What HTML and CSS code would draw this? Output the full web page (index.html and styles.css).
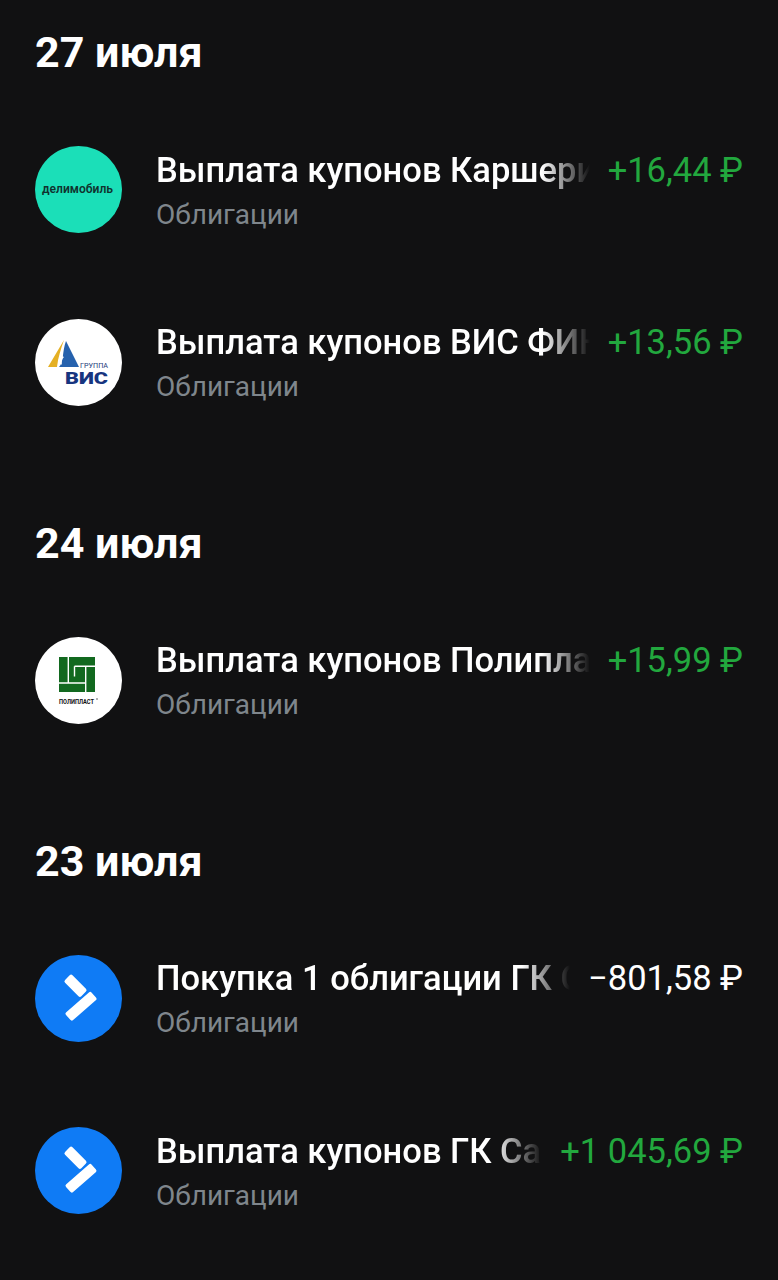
FILE: index.html
```html
<!DOCTYPE html>
<html lang="ru">
<head>
<meta charset="utf-8">
<title>Операции</title>
<link rel="stylesheet" href="styles.css">
</head>
<body>
<main class="feed">
  <section class="day">
    <h2 class="day-title">27 июля</h2>
    <div class="op">
      <svg class="logo" viewBox="0 0 87 87"><circle cx="43.500" cy="43.500" r="43.500" fill="#1bdfb8"/><text class="t-deli" x="7" y="47" textLength="71" lengthAdjust="spacingAndGlyphs">делимобиль</text></svg>
      <div class="op-text"><div class="op-title">Выплата купонов Каршеринг Руссия</div><div class="op-sub">Облигации</div></div>
      <div class="op-sum plus">+16,44 ₽</div>
    </div>
    <div class="op">
      <svg class="logo" viewBox="0 0 87 87"><circle cx="43.500" cy="43.500" r="43.500" fill="#fff"/><path d="M29 21 L13 48 H22 C23 38 26 30 29 21Z" fill="#e5b024"/><path d="M31 22 L44 48 H24 C29 43 27 33 31 22Z" fill="#2561ad"/><path d="M27 37 C24 41 25 44 27 46 C26 42 27 40 29 38Z" fill="#fff"/><text class="t-gr" x="45" y="49" textLength="28" lengthAdjust="spacingAndGlyphs">ГРУППА</text><text class="t-vis" x="30" y="65" textLength="43" lengthAdjust="spacingAndGlyphs">ВИС</text></svg>
      <div class="op-text"><div class="op-title">Выплата купонов ВИС ФИНАНС</div><div class="op-sub">Облигации</div></div>
      <div class="op-sum plus">+13,56 ₽</div>
    </div>
  </section>
  <section class="day">
    <h2 class="day-title">24 июля</h2>
    <div class="op">
      <svg class="logo" viewBox="0 0 87 87"><circle cx="43.500" cy="43.500" r="43.500" fill="#fff"/><rect x="24" y="20" width="36" height="35" fill="#12691f"/><path d="M33.300 20V46M24 46H50.700M50.700 29.300V55M39.500 29.300H60M39.500 29.300V39.500" stroke="#fff" stroke-width="1.400" fill="none"/><text class="t-poli" x="24" y="67" textLength="35" lengthAdjust="spacingAndGlyphs">ПОЛИПЛАСТ</text><circle cx="62" cy="62" r="1" fill="#999"/></svg>
      <div class="op-text"><div class="op-title">Выплата купонов Полипласт</div><div class="op-sub">Облигации</div></div>
      <div class="op-sum plus">+15,99 ₽</div>
    </div>
  </section>
  <section class="day">
    <h2 class="day-title">23 июля</h2>
    <div class="op">
      <svg class="logo" viewBox="0 0 87 87"><circle cx="43.500" cy="43.500" r="43.500" fill="#0f7bf5"/><rect x="29" y="25.500" width="23" height="10.500" rx="2" fill="#fff" transform="rotate(45 40.500 30.750)"/><rect x="29" y="46" width="34" height="10.500" rx="2" fill="#fff" transform="rotate(-41 46 51.250)"/></svg>
      <div class="op-text"><div class="op-title">Покупка 1 облигации ГК Самолет</div><div class="op-sub">Облигации</div></div>
      <div class="op-sum">−801,58 ₽</div>
    </div>
    <div class="op">
      <svg class="logo" viewBox="0 0 87 87"><circle cx="43.500" cy="43.500" r="43.500" fill="#0f7bf5"/><rect x="29" y="25.500" width="23" height="10.500" rx="2" fill="#fff" transform="rotate(45 40.500 30.750)"/><rect x="29" y="46" width="34" height="10.500" rx="2" fill="#fff" transform="rotate(-41 46 51.250)"/></svg>
      <div class="op-text"><div class="op-title">Выплата купонов ГК Самолет</div><div class="op-sub">Облигации</div></div>
      <div class="op-sum plus">+1 045,69 ₽</div>
    </div>
  </section>
</main>
</body>
</html>
```
FILE: styles.css
```css
* { box-sizing: border-box; }
html, body { margin: 0; height: 100%; }
body {
  background: #111112;
  color: #fff;
  font-family: Roboto, "Noto Sans", sans-serif;
  overflow: hidden;
}
.feed { padding: 30.400px 35px 0; }
.day { margin-bottom: 72.400px; }
.day-title {
  margin: 0 0 28px;
  font-size: 43px;
  line-height: 45px;
  font-weight: 700;
}
.op {
  display: flex;
  align-items: center;
  height: 172.600px;
}
.logo { width: 87px; height: 87px; flex: none; margin-left: -0.500px; }
.op-text {
  flex: 1;
  min-width: 0;
  margin-left: 34.500px;
  padding-top: 5px;
}
.op-title {
  font-size: 34.500px;
  line-height: 44px;
  font-weight: 500;
  white-space: nowrap;
  overflow: hidden;
  -webkit-mask-image: linear-gradient(to right, #000 calc(100% - 48px), transparent);
  mask-image: linear-gradient(to right, #000 calc(100% - 48px), transparent);
}
.op-sub {
  margin-top: 1px;
  font-size: 28px;
  line-height: 44px;
  color: #7f868c;
}
.op-sum {
  flex: none;
  margin-left: 18px;
  margin-bottom: 40px;
  font-size: 34.500px;
  line-height: 44px;
}
.plus { color: #22a83e; }
.t-deli { font: 600 12px Roboto, sans-serif; fill: #10332f; }
.t-gr { font: 400 8px Roboto, sans-serif; fill: #1d3b7a; }
.t-vis { font: 900 17px Roboto, sans-serif; fill: #17357f; }
.t-poli { font: 700 6.500px Roboto, sans-serif; fill: #111; }
```
